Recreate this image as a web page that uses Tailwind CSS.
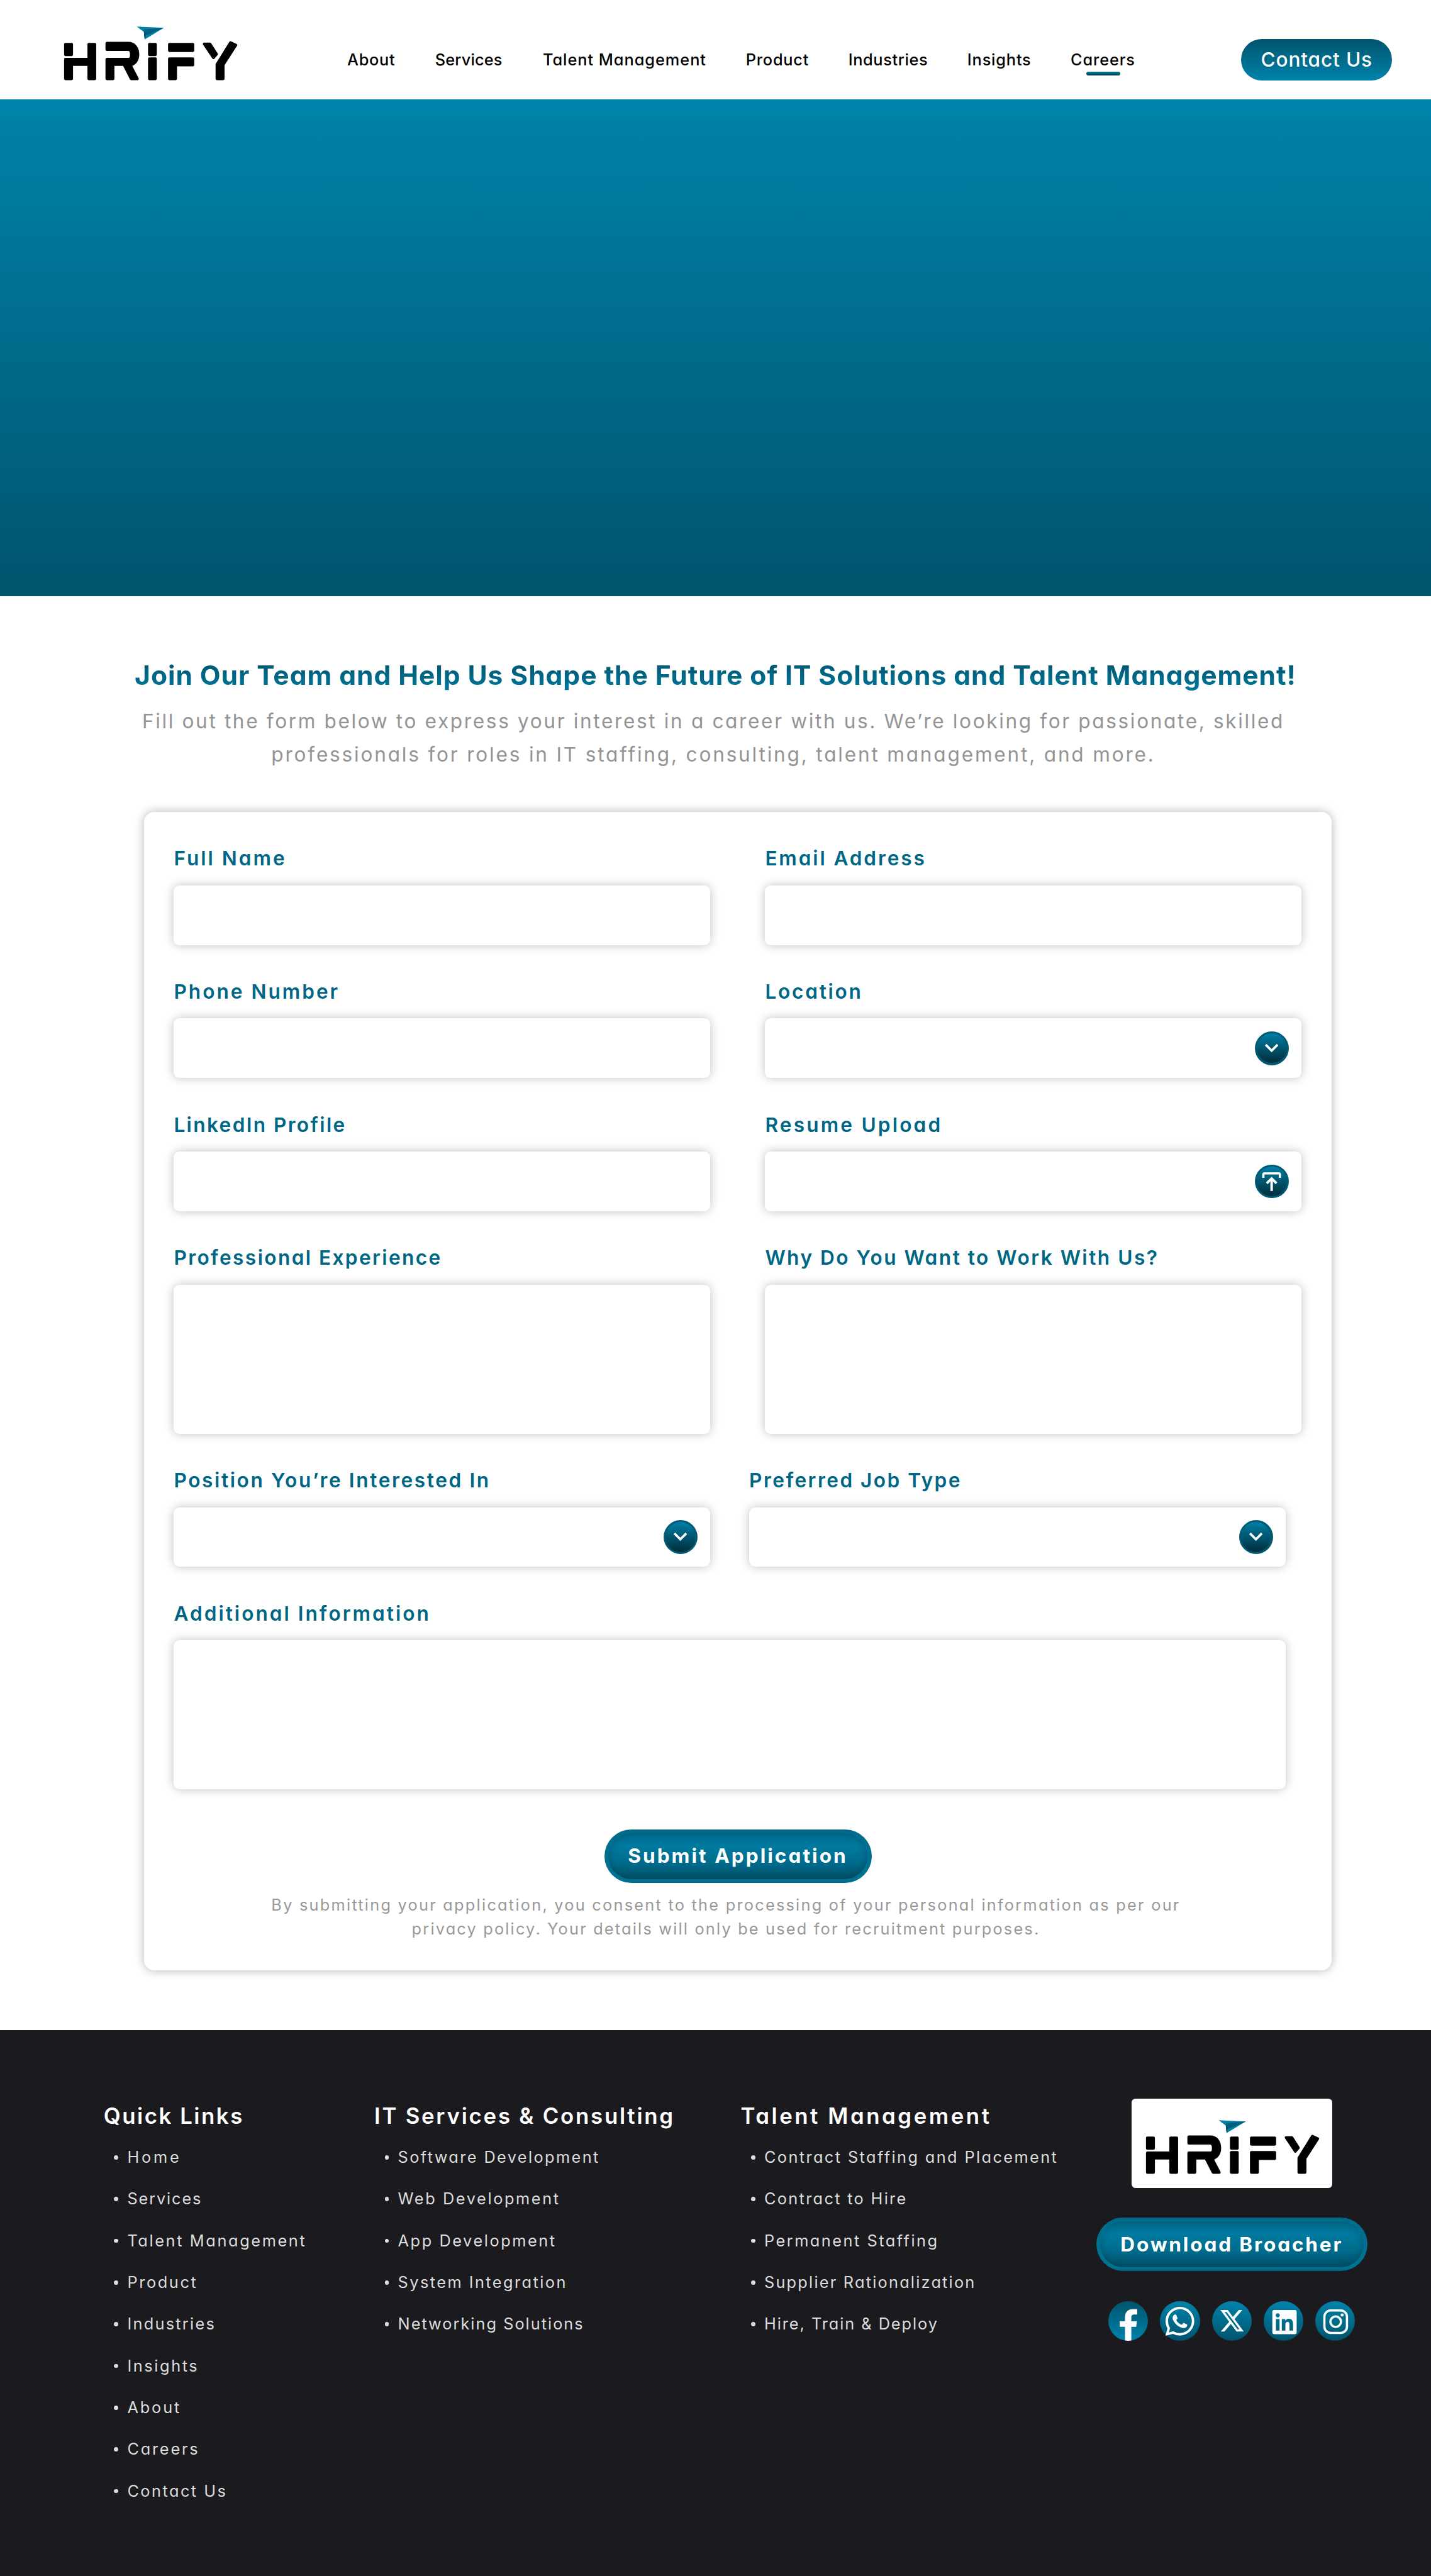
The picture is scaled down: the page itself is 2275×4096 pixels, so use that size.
<!DOCTYPE html>
<html lang="en">
<head>
<meta charset="utf-8">
<title>HRIFY Careers</title>
<script src="https://cdn.jsdelivr.net/npm/@tailwindcss/browser@4"></script>
</head>
<body class="w-[2275px] h-[4096px] overflow-hidden bg-white font-['Inter',sans-serif] [font-feature-settings:'cv11'] whitespace-nowrap">

<svg class="hidden">
  <defs>
    <symbol id="logo" viewBox="80 60 1060 340">
      <g fill="#000" stroke="#000" stroke-width="16" stroke-linejoin="round">
        <path d="M95 175H133V239H95Z"/>
        <path d="M95 266H236V175H273V384H236V298H133V384H95Z"/>
        <path d="M345 169H475C512 169 533 198 533 237C533 270 517 292 488 303L530 384H492L448 298H383V384H345V266H475C486 266 493 255 493 240V235C493 220 486 208 474 208H345Z"/>
        <path d="M602 175H639V239H602Z"/>
        <path d="M602 263H639V384H602Z"/>
        <path d="M723 175H865V214H723Z"/>
        <path d="M723 263H865V301H761V384H723Z"/>
        <path d="M933 173H968L1008 235L989 257Z"/>
        <path d="M1092 165L1125 180L1048 300V384H1010V297Z"/>
      </g>
      <path fill="#0082aa" d="M526 69L690 76L574 145L569 101Z"/>
      <path fill="#00607d" d="M570 86L690 76L585 123L574 143L569 101Z"/>
      <path fill="#0082aa" d="M582 118L586 123L640 106L574 145Z"/>
      <path fill="#004a60" d="M569 101L574 145L579 132L574 104Z"/>
    </symbol>
    <symbol id="chevron" viewBox="0 0 68 68">
      <path d="M22 27L34 39L46 27" fill="none" stroke="#fff" stroke-width="4.6"/>
    </symbol>
    <symbol id="upload" viewBox="0 0 68 68">
      <g fill="none" stroke="#fff" stroke-width="4.6">
        <path d="M17.3 27V20.2Q17.3 17.7 19.8 17.7H48.2Q50.7 17.7 50.7 20.2V27"/>
        <path d="M24.2 37.6L34 28L43.8 37.6" stroke-width="5"/>
        <path d="M34 28V53" stroke-width="5"/>
      </g>
    </symbol>
  </defs>
</svg>

<header class="h-[158px] pt-[32px] pl-[100px] flex items-center bg-white">
  <svg class="w-[279.1px] h-[89.5px] mb-[21px] shrink-0"><use href="#logo"/></svg>
  <nav class="flex ml-[172.9px] text-[25.3px] leading-[36px] font-medium text-black">
    <a class="w-[139.8px] tracking-[0.74px]">About</a>
    <a class="w-[171.1px] tracking-[0.19px]">Services</a>
    <a class="w-[322.9px] tracking-[0.99px]">Talent Management</a>
    <a class="w-[162.9px] tracking-[0.78px]">Product</a>
    <a class="w-[189.2px] tracking-[0.65px]">Industries</a>
    <a class="w-[164.2px] tracking-[0.84px]">Insights</a>
    <a class="w-[271.1px] tracking-[0.89px] relative">Careers<span class="absolute left-[24.8px] top-[36.7px] w-[53.7px] h-[6.3px] rounded-full bg-linear-to-b from-[#0080a6] to-[#003c4e]"></span></a>
  </nav>
  <a class="w-[240.2px] h-[66.4px] rounded-full bg-linear-to-b from-[#00546d] to-[#0083ab] flex items-center justify-center pb-[1px] text-[31.6px] font-medium tracking-[0.85px] text-white">Contact Us</a>
</header>

<section class="h-[790px] bg-linear-to-b from-[#0083ab] to-[#00546d]"></section>

<main class="pt-[94px] flex flex-col">
  <h1 class="text-center text-[42.6px] leading-[64px] font-bold tracking-[0.92px] bg-linear-to-b from-[#004e66] to-[#007ea4] bg-clip-text text-transparent">Join Our Team and Help Us Shape the Future of IT Solutions and Talent Management!</h1>
  <p class="mt-[13.9px] pr-[7px] text-center text-[31.6px] leading-[53.4px] text-[#949494]">
    <span class="block tracking-[2.63px]">Fill out the form below to express your interest in a career with us. We’re looking for passionate, skilled</span>
    <span class="block tracking-[2.8px]">professionals for roles in IT staffing, consulting, talent management, and more.</span>
  </p>

  <form class="mt-[64px] ml-[229px] w-[1888px] h-[1842.2px] pt-[50.5px] px-[47.4px] rounded-[16px] bg-white shadow-[0_0_16px_rgba(0,0,0,0.3)] flex flex-col gap-[50.4px] text-[31.6px] leading-[47.4px] font-semibold text-[#006685]">
    <div class="flex gap-[86.9px]">
      <div class="w-[853.1px] flex flex-col gap-[19.1px]"><label class="tracking-[3.02px]">Full Name</label><div class="h-[94.8px] rounded-[9.5px] bg-white shadow-[0_0_16px_rgba(0,0,0,0.25)]"></div></div>
      <div class="w-[853.1px] flex flex-col gap-[19.1px]"><label class="tracking-[2.87px]">Email Address</label><div class="h-[94.8px] rounded-[9.5px] bg-white shadow-[0_0_16px_rgba(0,0,0,0.25)]"></div></div>
    </div>
    <div class="flex gap-[86.9px]">
      <div class="w-[853.1px] flex flex-col gap-[19.1px]"><label class="tracking-[3.01px]">Phone Number</label><div class="h-[94.8px] rounded-[9.5px] bg-white shadow-[0_0_16px_rgba(0,0,0,0.25)]"></div></div>
      <div class="w-[853.1px] flex flex-col gap-[19.1px]"><label class="tracking-[2.76px]">Location</label><div class="h-[94.8px] rounded-[9.5px] bg-white shadow-[0_0_16px_rgba(0,0,0,0.25)] flex items-center justify-end pr-[20.5px]"><span class="size-[53.7px] rounded-full bg-[#005a74] p-[3.2px]"><span class="block size-full rounded-full bg-linear-to-b from-[#0080a7] to-[#002e3c]"><svg class="size-[53.7px] max-w-none -translate-x-[3.2px] -translate-y-[3.2px]"><use href="#chevron"/></svg></span></span></div></div>
    </div>
    <div class="flex gap-[86.9px]">
      <div class="w-[853.1px] flex flex-col gap-[19.1px]"><label class="tracking-[2.37px]">LinkedIn Profile</label><div class="h-[94.8px] rounded-[9.5px] bg-white shadow-[0_0_16px_rgba(0,0,0,0.25)]"></div></div>
      <div class="w-[853.1px] flex flex-col gap-[19.1px]"><label class="tracking-[3.19px]">Resume Upload</label><div class="h-[94.8px] rounded-[9.5px] bg-white shadow-[0_0_16px_rgba(0,0,0,0.25)] flex items-center justify-end pr-[20.5px]"><span class="size-[53.7px] rounded-full bg-[#005a74] p-[3.2px]"><span class="block size-full rounded-full bg-linear-to-b from-[#0080a7] to-[#002e3c]"><svg class="size-[53.7px] max-w-none -translate-x-[3.2px] -translate-y-[3.2px]"><use href="#upload"/></svg></span></span></div></div>
    </div>
    <div class="flex gap-[86.9px]">
      <div class="w-[853.1px] flex flex-col gap-[19.1px]"><label class="tracking-[2.41px]">Professional Experience</label><div class="h-[237px] rounded-[9.5px] bg-white shadow-[0_0_16px_rgba(0,0,0,0.25)]"></div></div>
      <div class="w-[853.1px] flex flex-col gap-[19.1px]"><label class="tracking-[2.5px]">Why Do You Want to Work With Us?</label><div class="h-[237px] rounded-[9.5px] bg-white shadow-[0_0_16px_rgba(0,0,0,0.25)]"></div></div>
    </div>
    <div class="flex gap-[61.6px]">
      <div class="w-[853.1px] flex flex-col gap-[19.1px]"><label class="tracking-[2.63px]">Position You’re Interested In</label><div class="h-[94.8px] rounded-[9.5px] bg-white shadow-[0_0_16px_rgba(0,0,0,0.25)] flex items-center justify-end pr-[20.5px]"><span class="size-[53.7px] rounded-full bg-[#005a74] p-[3.2px]"><span class="block size-full rounded-full bg-linear-to-b from-[#0080a7] to-[#002e3c]"><svg class="size-[53.7px] max-w-none -translate-x-[3.2px] -translate-y-[3.2px]"><use href="#chevron"/></svg></span></span></div></div>
      <div class="w-[853.1px] flex flex-col gap-[19.1px]"><label class="tracking-[2.48px]">Preferred Job Type</label><div class="h-[94.8px] rounded-[9.5px] bg-white shadow-[0_0_16px_rgba(0,0,0,0.25)] flex items-center justify-end pr-[20.5px]"><span class="size-[53.7px] rounded-full bg-[#005a74] p-[3.2px]"><span class="block size-full rounded-full bg-linear-to-b from-[#0080a7] to-[#002e3c]"><svg class="size-[53.7px] max-w-none -translate-x-[3.2px] -translate-y-[3.2px]"><use href="#chevron"/></svg></span></span></div></div>
    </div>
    <div class="w-[1767.9px] flex flex-col gap-[19.1px]"><label class="tracking-[3.02px]">Additional Information</label><div class="h-[237px] rounded-[9.5px] bg-white shadow-[0_0_16px_rgba(0,0,0,0.25)]"></div></div>
    <div class="mt-[12.8px] flex flex-col items-center">
      <button type="button" class="w-[425px] h-[85.3px] p-[6.3px] rounded-full flex bg-[linear-gradient(to_bottom,#006784_0%,#006d8e_8%,#00708f_60%,#007394_93%,#006683_100%)] text-[31.6px] font-bold tracking-[3.03px] text-white"><span class="flex-1 self-stretch rounded-full flex items-center justify-center bg-[linear-gradient(to_bottom,#006d8e_0%,#007a9f_28%,#006b8b_65%,#005068_100%)] shadow-[inset_0_0_14px_rgba(0,40,52,0.3)]">Submit Application</span></button>
      <p class="mt-[16.3px] pr-[38px] text-center text-[25.3px] leading-[37.9px] font-normal text-[#999999]">
        <span class="block tracking-[2.26px]">By submitting your application, you consent to the processing of your personal information as per our</span>
        <span class="block tracking-[2.2px]">privacy policy. Your details will only be used for recruitment purposes.</span>
      </p>
    </div>
  </form>
</main>

<footer class="mt-[94.8px] h-[870px] pt-[109px] pl-[164.8px] flex items-start bg-[#1b1a1e] text-[25.3px] leading-[66.35px] text-[#dddddd]">
  <section class="w-[430.2px] pt-[3px]">
    <h2 class="text-[34.8px] leading-[48px] font-semibold tracking-[2.53px] text-white">Quick Links</h2>
    <ul class="mt-[9.4px] pl-[16.6px]">
      <li class="flex items-center gap-[14.3px] before:size-[6.7px] before:rounded-full before:bg-[#dddddd]"><a class="tracking-[3.87px]">Home</a></li>
      <li class="flex items-center gap-[14.3px] before:size-[6.7px] before:rounded-full before:bg-[#dddddd]"><a class="tracking-[1.89px]">Services</a></li>
      <li class="flex items-center gap-[14.3px] before:size-[6.7px] before:rounded-full before:bg-[#dddddd]"><a class="tracking-[2.63px]">Talent Management</a></li>
      <li class="flex items-center gap-[14.3px] before:size-[6.7px] before:rounded-full before:bg-[#dddddd]"><a class="tracking-[2.64px]">Product</a></li>
      <li class="flex items-center gap-[14.3px] before:size-[6.7px] before:rounded-full before:bg-[#dddddd]"><a class="tracking-[2.28px]">Industries</a></li>
      <li class="flex items-center gap-[14.3px] before:size-[6.7px] before:rounded-full before:bg-[#dddddd]"><a class="tracking-[2.61px]">Insights</a></li>
      <li class="flex items-center gap-[14.3px] before:size-[6.7px] before:rounded-full before:bg-[#dddddd]"><a class="tracking-[2.89px]">About</a></li>
      <li class="flex items-center gap-[14.3px] before:size-[6.7px] before:rounded-full before:bg-[#dddddd]"><a class="tracking-[2.8px]">Careers</a></li>
      <li class="flex items-center gap-[14.3px] before:size-[6.7px] before:rounded-full before:bg-[#dddddd]"><a class="tracking-[2.48px]">Contact Us</a></li>
    </ul>
  </section>
  <section class="w-[582.4px] pt-[3px]">
    <h2 class="text-[34.8px] leading-[48px] font-semibold tracking-[2.76px] text-white">IT Services &amp; Consulting</h2>
    <ul class="mt-[9.4px] pl-[16.6px]">
      <li class="flex items-center gap-[14.3px] before:size-[6.7px] before:rounded-full before:bg-[#dddddd]"><a class="tracking-[2.4px]">Software Development</a></li>
      <li class="flex items-center gap-[14.3px] before:size-[6.7px] before:rounded-full before:bg-[#dddddd]"><a class="tracking-[2.61px]">Web Development</a></li>
      <li class="flex items-center gap-[14.3px] before:size-[6.7px] before:rounded-full before:bg-[#dddddd]"><a class="tracking-[2.58px]">App Development</a></li>
      <li class="flex items-center gap-[14.3px] before:size-[6.7px] before:rounded-full before:bg-[#dddddd]"><a class="tracking-[2.46px]">System Integration</a></li>
      <li class="flex items-center gap-[14.3px] before:size-[6.7px] before:rounded-full before:bg-[#dddddd]"><a class="tracking-[2.02px]">Networking Solutions</a></li>
    </ul>
  </section>
  <section class="w-[565.2px] pt-[3px]">
    <h2 class="text-[34.8px] leading-[48px] font-semibold tracking-[3.56px] text-white">Talent Management</h2>
    <ul class="mt-[9.4px] pl-[16.6px]">
      <li class="flex items-center gap-[14.3px] before:size-[6.7px] before:rounded-full before:bg-[#dddddd]"><a class="tracking-[2.41px]">Contract Staffing and Placement</a></li>
      <li class="flex items-center gap-[14.3px] before:size-[6.7px] before:rounded-full before:bg-[#dddddd]"><a class="tracking-[2.33px]">Contract to Hire</a></li>
      <li class="flex items-center gap-[14.3px] before:size-[6.7px] before:rounded-full before:bg-[#dddddd]"><a class="tracking-[2.51px]">Permanent Staffing</a></li>
      <li class="flex items-center gap-[14.3px] before:size-[6.7px] before:rounded-full before:bg-[#dddddd]"><a class="tracking-[2.23px]">Supplier Rationalization</a></li>
      <li class="flex items-center gap-[14.3px] before:size-[6.7px] before:rounded-full before:bg-[#dddddd]"><a class="tracking-[1.96px]">Hire, Train &amp; Deploy</a></li>
    </ul>
  </section>
  <section class="w-[431.3px] flex flex-col items-center gap-[47.3px]">
    <div class="w-[319.1px] h-[142.2px] pt-[31.9px] pl-[21.2px] rounded-[6.3px] bg-white"><svg class="w-[279.1px] h-[89.5px]"><use href="#logo"/></svg></div>
    <button type="button" class="w-[431.3px] h-[85.3px] p-[6.3px] rounded-full flex bg-[linear-gradient(to_bottom,#006784_0%,#006d8e_8%,#00708f_60%,#007394_93%,#006683_100%)] text-[31.6px] font-bold tracking-[2.83px] text-white"><span class="flex-1 self-stretch rounded-full flex items-center justify-center bg-[linear-gradient(to_bottom,#006d8e_0%,#007a9f_28%,#006b8b_65%,#005068_100%)] shadow-[inset_0_0_14px_rgba(0,40,52,0.3)]">Download Broacher</span></button>
    <div class="flex gap-[19px]">
      <a class="size-[63.2px] rounded-full overflow-hidden bg-linear-to-b from-[#00546d] to-[#0083ab]"><svg class="size-full" viewBox="0 0 80 80"><path fill="#fff" d="M33.6 81V51.7H23V40.6H33.6V32C33.6 21.5 40 16.2 49 16.2H58.1V26.8H52.5C48 26.8 46.3 29 46.3 32.5V40.6H57.5L56 51.7H46.3V81Z"/></svg></a>
      <a class="size-[63.2px] rounded-full bg-linear-to-b from-[#0083ab] to-[#00546d]"><svg class="size-full" viewBox="0 0 80 80"><g transform="translate(11 11.4) scale(2.43)"><path fill="#fff" d="M17.472 14.382c-.297-.149-1.758-.867-2.03-.967-.273-.099-.471-.148-.67.15-.197.297-.767.966-.94 1.164-.173.199-.347.223-.644.075-.297-.15-1.255-.463-2.39-1.475-.883-.788-1.48-1.761-1.653-2.059-.173-.297-.018-.458.13-.606.134-.133.298-.347.446-.52.149-.174.198-.298.298-.497.099-.198.05-.371-.025-.52-.075-.149-.669-1.612-.916-2.207-.242-.579-.487-.5-.669-.51-.173-.008-.371-.01-.57-.01-.198 0-.52.074-.792.372-.272.297-1.04 1.016-1.04 2.479 0 1.462 1.065 2.875 1.213 3.074.149.198 2.096 3.2 5.077 4.487.709.306 1.262.489 1.694.625.712.227 1.36.195 1.871.118.571-.085 1.758-.719 2.006-1.413.248-.694.248-1.289.173-1.413-.074-.124-.272-.198-.57-.347m-5.421 7.403h-.004a9.87 9.87 0 01-5.031-1.378l-.361-.214-3.741.982.998-3.648-.235-.374a9.86 9.86 0 01-1.51-5.26c.001-5.45 4.436-9.884 9.888-9.884 2.64 0 5.122 1.03 6.988 2.898a9.825 9.825 0 012.893 6.994c-.003 5.45-4.437 9.884-9.885 9.884m8.413-18.297A11.815 11.815 0 0012.05 0C5.495 0 .16 5.335.157 11.892c0 2.096.547 4.142 1.588 5.945L.057 24l6.305-1.654a11.882 11.882 0 005.683 1.448h.005c6.554 0 11.89-5.335 11.893-11.893a11.821 11.821 0 00-3.48-8.413z"/></g></svg></a>
      <a class="size-[63.2px] rounded-full bg-linear-to-b from-[#0083ab] to-[#00546d]"><svg class="size-full" viewBox="0 0 80 80"><g transform="translate(16.6 15.6) scale(2.944 2.98)"><path fill="#fff" d="M12.6.75h2.454l-5.36 6.142L16 15.25h-4.937l-3.867-5.07-4.425 5.07H.316l5.733-6.57L0 .75h5.063l3.495 4.633L12.601.75Zm-.86 13.028h1.36L4.323 2.145H2.865z"/></g></svg></a>
      <a class="size-[63.2px] rounded-full bg-linear-to-b from-[#0083ab] to-[#00546d]"><svg class="size-full" viewBox="0 0 80 80"><g transform="translate(17.4 17.6) scale(2.04)"><path fill="#fff" d="M20.447 20.452h-3.554v-5.569c0-1.328-.027-3.037-1.852-3.037-1.853 0-2.136 1.445-2.136 2.939v5.667H9.351V9h3.414v1.561h.046c.477-.9 1.637-1.85 3.37-1.85 3.601 0 4.267 2.37 4.267 5.455v6.286zM5.337 7.433c-1.144 0-2.063-.926-2.063-2.065 0-1.138.92-2.063 2.063-2.063 1.14 0 2.064.925 2.064 2.063 0 1.139-.925 2.065-2.064 2.065zm1.782 13.019H3.555V9h3.564v11.452zM22.225 0H1.771C.792 0 0 .774 0 1.729v20.542C0 23.227.792 24 1.771 24h20.451C23.2 24 24 23.227 24 22.271V1.729C24 .774 23.2 0 22.222 0h.003z"/></g></svg></a>
      <a class="size-[63.2px] rounded-full bg-linear-to-b from-[#0083ab] to-[#00546d]"><svg class="size-full" viewBox="0 0 80 80"><g fill="none" stroke="#fff" stroke-width="4.5"><rect x="18.4" y="18.7" width="45.4" height="45.2" rx="12.5"/><circle cx="41.1" cy="41.3" r="10.7"/></g><circle cx="54.2" cy="27.9" r="3.1" fill="#fff"/></svg></a>
    </div>
  </section>
</footer>
</body>
</html>
